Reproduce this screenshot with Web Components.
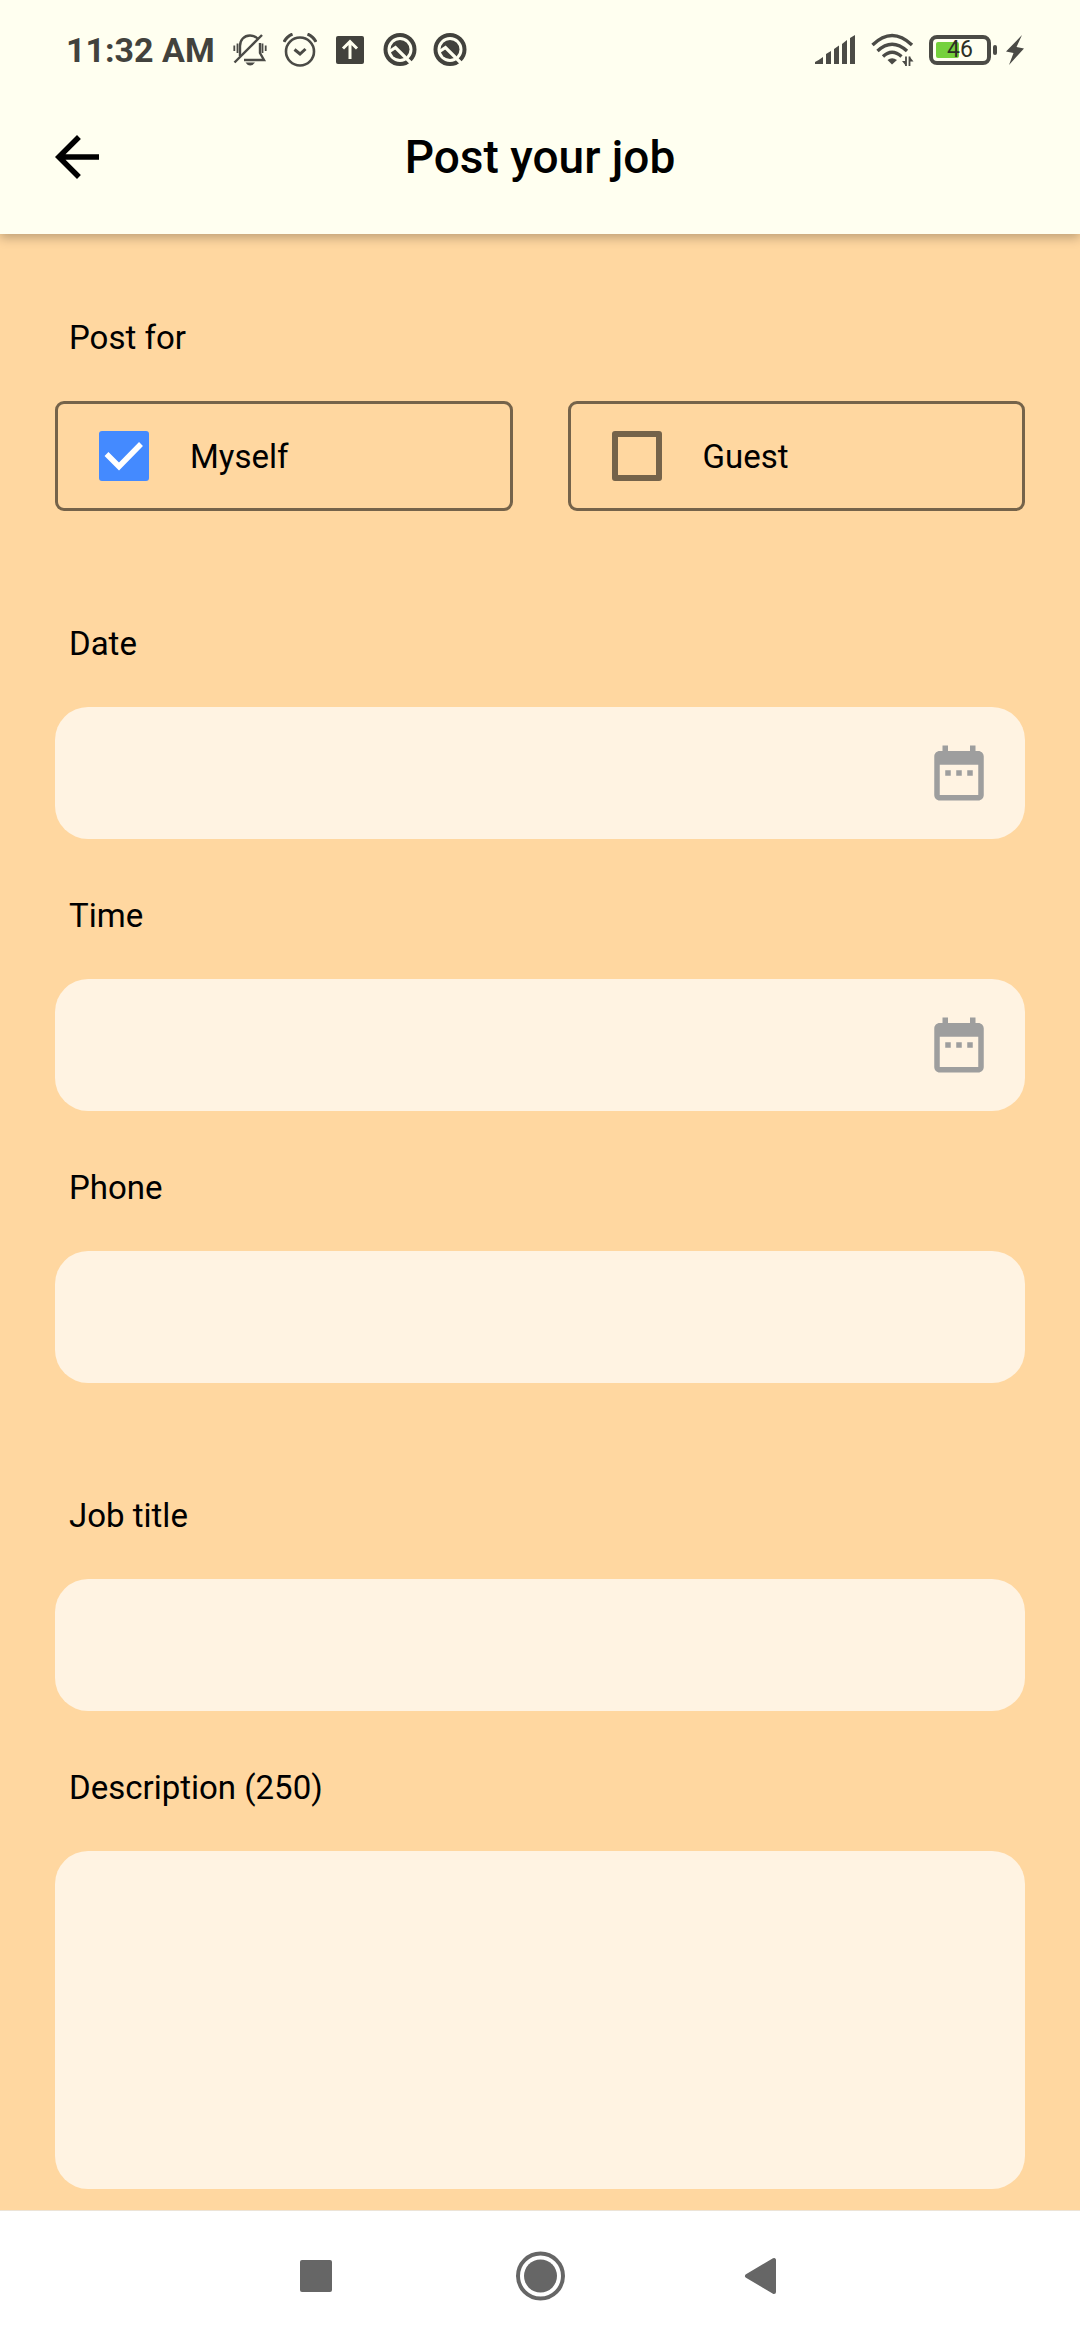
<!DOCTYPE html>
<html lang="en">
<head>
<meta charset="utf-8">
<meta name="viewport" content="width=device-width, initial-scale=1">
<title>Post your job</title>
<style>
  html { height: 100%; }
  body {
    margin: 0;
    font-family: Roboto, "Liberation Sans", sans-serif;
    font-size: 33px;
    line-height: 39px;
    color: #000;
    background: #ffd7a0;
    --bar: #fffff0;
    --page: #ffd7a0;
    --field: #fff3e2;
    --outline: #75634a;
    --accent: #448aff;
    --status: #4b4b46;
  }
</style>
</head>
<body>
<job-screen></job-screen>

<script>
const define = (name, html, setup) => {
  const template = document.createElement('template');
  template.innerHTML = html;
  customElements.define(name, class extends HTMLElement {
    constructor() {
      super();
      this.attachShadow({ mode: 'open' }).append(template.content.cloneNode(true));
    }
    connectedCallback() {
      if (setup) setup(this, this.shadowRoot);
    }
  });
};

define('status-bar', `
<style>
  :host { display: flex; justify-content: space-between; align-items: center; height: 60px; padding: 20px 56px 0 66px; color: var(--status); }
  div { display: flex; align-items: center; gap: 16px; }
  .time { padding-right: 2px; font-size: 34px; font-weight: 700; color: #42423d; }
  svg { display: block; fill: none; stroke: currentColor; }
  .battery { display: grid; }
  .battery > * { grid-area: 1 / 1; }
  .battery span { justify-self: start; align-self: center; width: 62px; text-align: center; font-size: 23px; line-height: 30px; color: #2c3024; }
  .right { gap: 15px; }
  .power { gap: 8px; }
</style>
<div>
  <span class="time">11:32 AM</span>
  <svg width="34" height="34" viewBox="0 0 34 34" stroke-width="2.4" aria-label="Silent">
    <path d="M7 23V13C7 7 11 2.500 17 2.500C20 2.500 22.500 3.500 24.500 5.500M27 10V20L31 27H11"/>
    <path d="M1.500 29.500L29 2"/>
    <path d="M1.300 12.500V18M4.500 10.500V20M29.500 10.500V20M32.700 12.500V18" stroke-width="1.800"/>
    <path d="M12.500 29.500H22Q20 32.500 17.200 32.500T12.500 29.500Z" fill="currentColor" stroke="none"/>
  </svg>
  <svg width="34" height="34" viewBox="0 0 34 34" stroke-width="2.600" aria-label="Alarm">
    <circle cx="17" cy="18.500" r="14"/>
    <path d="M11.500 16.500L17 21L22.500 16" stroke-width="3"/>
    <path d="M1 9Q3.500 3.500 9.500 1M33 9Q30.500 3.500 24.500 1" stroke-width="3"/>
  </svg>
  <svg width="34" height="34" viewBox="0 0 34 34" aria-label="Upload">
    <rect x="3" y="3" width="28" height="28" rx="2" fill="#42423d" stroke="none"/>
    <path d="M17 26V9M10 15.500L17 8.500L24 15.500" stroke="#fffff0" stroke-width="3"/>
  </svg>
  <svg width="34" height="34" viewBox="0 0 34 34" aria-label="App">
    <circle cx="17" cy="16.500" r="14.500" stroke="#42423d" stroke-width="4"/>
    <circle cx="17" cy="16.500" r="9.500" fill="#42423d" stroke="none"/>
    <path d="M6.500 18.500L12.500 14.500L29.500 31.500" stroke="#fffff0" stroke-width="3.200"/>
  </svg>
  <svg width="34" height="34" viewBox="0 0 34 34" aria-label="App">
    <circle cx="17" cy="16.500" r="14.500" stroke="#42423d" stroke-width="4"/>
    <circle cx="17" cy="16.500" r="9.500" fill="#42423d" stroke="none"/>
    <path d="M6.500 18.500L12.500 14.500L29.500 31.500" stroke="#fffff0" stroke-width="3.200"/>
  </svg>
</div>
<div class="right">
  <svg width="41" height="30" viewBox="0 0 41 30" aria-label="Signal">
    <g fill="currentColor" stroke="none">
      <path d="M0 29V27Q4 25 8 22V29ZM11 29V19L16 16V29ZM19 29V14L24 10.500V29ZM27 29V9L32 5V29ZM35 29V3L40 0V29Z"/>
    </g>
  </svg>
  <svg width="43" height="34" viewBox="0 0 43 34" stroke-width="3.400" aria-label="Wi-Fi">
    <path d="M1.500 12Q21 -7 41 12M6.500 18Q21 4.500 36 18M12 23.500Q21 15 30.500 23.500"/>
    <path d="M16.500 27Q21 23.500 26 27L21 31.500Z" fill="currentColor" stroke="none"/>
    <path d="M35 23.500V33M38.500 23.500V33" stroke-width="1.800"/>
    <path d="M31 28H35V33ZM42.500 28.500H38.500V23.500Z" fill="currentColor" stroke="none"/>
  </svg>
  <div class="power">
    <div class="battery">
      <svg width="69" height="30" viewBox="0 0 69 30" aria-hidden="true">
        <rect x="7" y="7" width="23" height="16" rx="2" fill="#75d13c" stroke="none"/>
        <rect x="2" y="2" width="58" height="26" rx="6" stroke-width="4"/>
        <rect x="64" y="10" width="4" height="10" rx="2" fill="currentColor" stroke="none"/>
      </svg>
      <span>46</span>
    </div>
    <svg width="18" height="30" viewBox="0 0 18 30" aria-label="Charging">
      <path d="M16 0L0 16.500L7.500 18L3 30L18 13.500L10.500 12Z" fill="currentColor" stroke="none"/>
    </svg>
  </div>
</div>`);

define('app-bar', `
<style>
  :host { display: grid; grid-template-columns: 1fr auto 1fr; align-items: center; height: 154px; padding: 0 44px; }
  button { justify-self: start; margin: 0; padding: 0; border: 0; background: none; color: inherit; }
  svg { display: block; }
  h1 { margin: 0; font-size: 46px; line-height: 54px; font-weight: 500; }
</style>
<button type="button" aria-label="Back">
  <svg width="66" height="66" viewBox="0 0 24 24" fill="currentColor"><path d="M20 11H7.830l5.590-5.590L12 4l-8 8 8 8 1.410-1.410L7.830 13H20v-2z"/></svg>
</button>
<h1><slot></slot></h1>`);

define('check-tile', `
<style>
  :host { display: block; flex: 1; }
  label { display: flex; align-items: center; gap: 41px; height: 104px; padding: 0 41px; border: 3px solid var(--outline); border-radius: 9px; }
  .box { display: grid; }
  .box > * { grid-area: 1 / 1; }
  input { appearance: none; box-sizing: border-box; width: 50px; height: 50px; margin: 0; border: 6px solid var(--outline); border-radius: 3px; }
  input:checked { background: var(--accent); border-color: var(--accent); }
  svg { display: none; pointer-events: none; }
  input:checked + svg { display: block; }
</style>
<label>
  <span class="box">
    <input type="checkbox">
    <svg width="50" height="50" viewBox="0 0 50 50" fill="none" stroke="#fff" stroke-width="5.500" aria-hidden="true"><path d="M7.500 23L20 35.500L42 13"/></svg>
  </span>
  <slot></slot>
</label>`, (host, root) => {
  root.querySelector('input').checked = host.hasAttribute('checked');
});

define('form-field', `
<style>
  :host { display: flex; flex-direction: column; gap: 44px; }
  label { padding: 0 14px; }
  .field { display: flex; align-items: center; border-radius: 33px; background: var(--field); }
  input, textarea { flex: 1; min-width: 0; box-sizing: border-box; height: 132px; margin: 0; padding: 0 33px; border: 0; outline: 0; background: none; font: inherit; color: inherit; }
  textarea { display: block; height: 338px; padding: 33px; resize: none; }
  button { margin: 0 33px 0 0; padding: 0; border: 0; background: none; color: #9e9e9e; }
  svg { display: block; }
  :host(:not([multiline])) textarea, :host([multiline]) input, :host(:not([picker])) button { display: none; }
</style>
<label for="control"><slot></slot></label>
<div class="field">
  <input type="text">
  <textarea maxlength="250"></textarea>
  <button type="button" aria-label="Choose">
    <svg width="66" height="66" viewBox="0 0 24 24" fill="currentColor"><path d="M9 11H7v2h2v-2zm4 0h-2v2h2v-2zm4 0h-2v2h2v-2zm2-7h-1V2h-2v2H8V2H6v2H5c-1.110 0-1.990.9-1.990 2L3 20c0 1.100.890 2 2 2h14c1.100 0 2-.9 2-2V6c0-1.100-.9-2-2-2zm0 16H5V9h14v11z"/></svg>
  </button>
</div>`, (host, root) => {
  root.querySelector(host.hasAttribute('multiline') ? 'textarea' : 'input').id = 'control';
});

define('nav-bar', `
<style>
  :host { display: flex; justify-content: center; align-items: center; gap: 150px; height: 129px; border-top: 1px solid #ece4d8; background: #fff; color: #666; }
  button { margin: 0; padding: 0; border: 0; background: none; color: inherit; }
  svg { display: block; }
</style>
<button type="button" aria-label="Recent apps">
  <svg width="72" height="72" viewBox="0 0 72 72" fill="currentColor"><rect x="18" y="20" width="32" height="32" rx="2"/></svg>
</button>
<button type="button" aria-label="Home">
  <svg width="72" height="72" viewBox="0 0 72 72" fill="currentColor"><circle cx="36.500" cy="36" r="16.500"/><circle cx="36.500" cy="36" r="22.500" fill="none" stroke="currentColor" stroke-width="4"/></svg>
</button>
<button type="button" aria-label="Back">
  <svg width="72" height="72" viewBox="0 0 72 72" fill="currentColor" stroke="currentColor" stroke-width="4" stroke-linejoin="round"><path d="M21 36L48 20V52Z"/></svg>
</button>`);

define('job-screen', `
<style>
  :host { display: flex; flex-direction: column; min-height: 100vh; }
  header { position: relative; background: var(--bar); box-shadow: 0 4px 10px rgba(0, 0, 0, .25); }
  form { flex: 1; display: flex; flex-direction: column; gap: 57px; padding: 84px 55px 21px; background: var(--page); }
  fieldset { display: flex; flex-direction: column; gap: 44px; min-width: 0; margin: 0; padding: 0; border: 0; }
  .caption { padding: 0 14px; }
  .options { display: flex; gap: 55px; }
  .section { display: flex; flex-direction: column; gap: 57px; padding-top: 56px; }
</style>
<header>
  <status-bar></status-bar>
  <app-bar>Post your job</app-bar>
</header>
<form>
  <fieldset aria-labelledby="post-for">
    <div class="caption" id="post-for">Post for</div>
    <div class="options">
      <check-tile checked>Myself</check-tile>
      <check-tile>Guest</check-tile>
    </div>
  </fieldset>
  <div class="section">
    <form-field picker>Date</form-field>
    <form-field picker>Time</form-field>
    <form-field>Phone</form-field>
  </div>
  <div class="section">
    <form-field>Job title</form-field>
    <form-field multiline>Description (250)</form-field>
  </div>
</form>
<nav-bar></nav-bar>`);
</script>
</body>
</html>
